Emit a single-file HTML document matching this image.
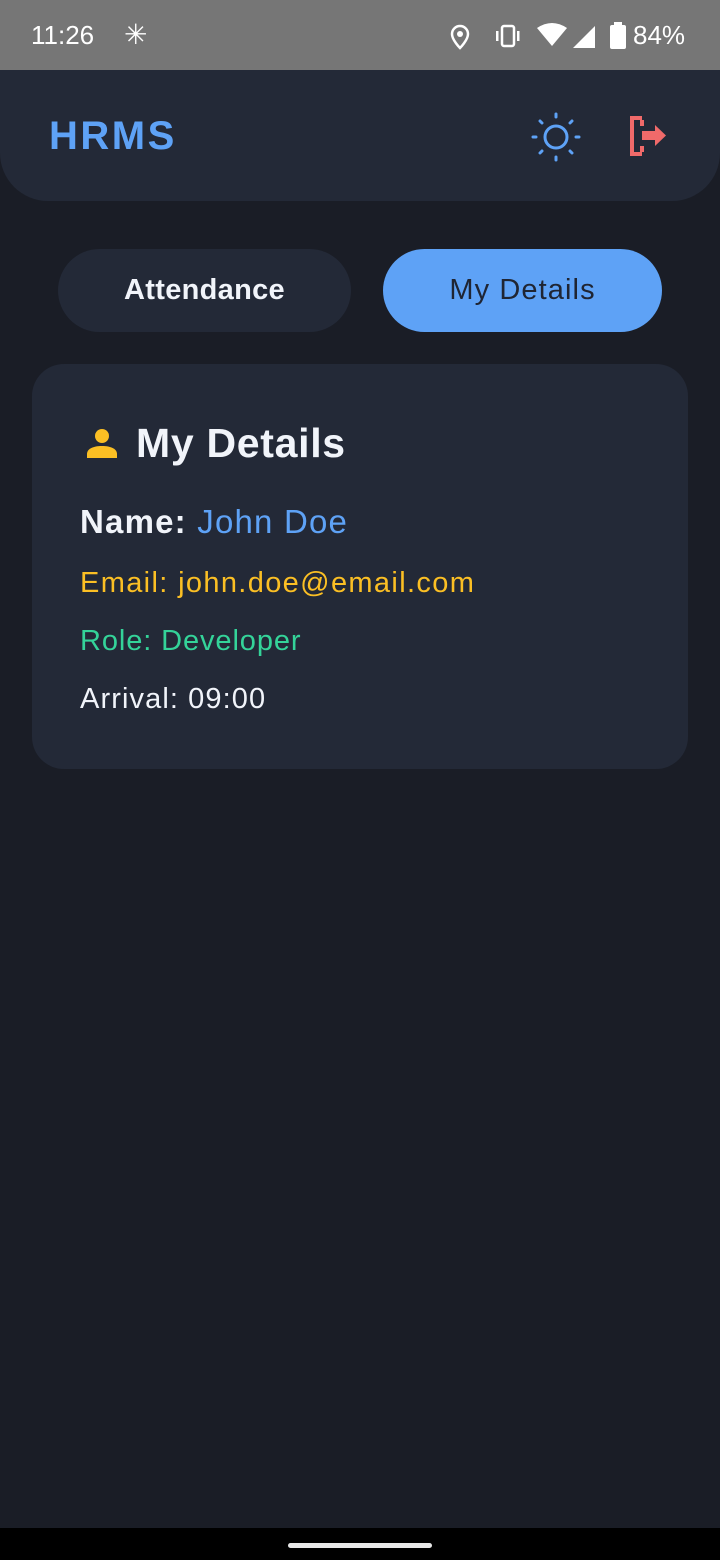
<!DOCTYPE html>
<html><head><meta charset="utf-8"><style>
*{margin:0;padding:0;box-sizing:border-box}
body{width:720px;height:1560px;background:#1a1d26;font-family:"Liberation Sans",sans-serif;position:relative;overflow:hidden}
.sb{position:absolute;top:0;left:0;width:720px;height:70px;background:#767676;color:#fff}
.hdr{position:absolute;top:70px;left:0;width:720px;height:131px;background:#232937;border-radius:0 0 48px 48px}
.t{position:absolute;white-space:nowrap}
.tab{position:absolute;top:249px;height:83px;border-radius:42px;font-weight:bold;font-size:29px;display:flex;align-items:center;justify-content:center}
.card{position:absolute;left:32px;top:364px;width:656px;height:405px;background:#232937;border-radius:32px}
</style></head><body>
<div class="sb">
<div class="t" style="left:31px;top:20px;font-size:26px">11:26</div>
<div class="t" style="left:124px;top:18px;font-size:28px">✳</div>
<svg style="position:absolute;left:449px;top:24px" width="22" height="26" viewBox="0 0 22 26"><path d="M11 2a8 8 0 0 0-8 8c0 6 8 14 8 14s8-8 8-14a8 8 0 0 0-8-8z" fill="none" stroke="#fff" stroke-width="2.5"/><circle cx="11" cy="10" r="3" fill="#fff"/></svg>
<svg style="position:absolute;left:493px;top:24px" width="30" height="24"><rect x="9" y="2" width="12" height="20" rx="2" fill="none" stroke="#fff" stroke-width="2.5"/><rect x="3" y="7" width="2.5" height="10" fill="#fff"/><rect x="24" y="7" width="2.5" height="10" fill="#fff"/></svg>
<svg style="position:absolute;left:537px;top:22px" width="60" height="28"><path d="M0 6Q15-4 30 6L15 24Z" fill="#fff"/><path d="M58 4V26H36Z" fill="#fff"/></svg>
<svg style="position:absolute;left:609px;top:22px" width="18" height="27"><rect x="5" y="0" width="8" height="4" fill="#fff"/><rect x="1" y="3" width="16" height="24" rx="2" fill="#fff"/></svg>
<div class="t" style="left:633px;top:20px;font-size:26px">84%</div>
</div>
<div class="hdr"></div>
<div class="t" style="left:49px;top:114px;font-size:40px;font-weight:bold;color:#5ea2f6;letter-spacing:2.5px">HRMS</div>
<svg style="position:absolute;left:530px;top:112px" width="52" height="50" viewBox="0 0 52 50"><circle cx="26" cy="25" r="11" fill="none" stroke="#5ea2f6" stroke-width="3"/><g stroke="#5ea2f6" stroke-width="3" stroke-linecap="round"><path d="M26 2v3M26 45v3M3 25h3M46 25h3M10 9l2 2M40 39l2 2M42 9l-2 2M12 39l-2 2"/></g></svg>
<svg style="position:absolute;left:628px;top:115px" width="42" height="42" viewBox="0 0 42 42"><path d="M14 3H4v36h10" fill="none" stroke="#f06a6a" stroke-width="4"/><path d="M14 5v6M14 31v6" stroke="#f06a6a" stroke-width="4"/><rect x="14" y="16" width="14" height="9" fill="#f06a6a"/><path d="M27 10l11 10.5L27 31z" fill="#f06a6a"/></svg>
<div class="tab" style="left:58px;width:293px;background:#232937;color:#f1f4fa;letter-spacing:0.3px">Attendance</div>
<div class="tab" style="left:383px;width:279px;background:#5ea2f6;color:#1f2533;font-weight:normal;letter-spacing:1.1px">My Details</div>
<div class="card"></div>
<svg style="position:absolute;left:86px;top:427px" width="32" height="32" viewBox="0 0 32 32"><circle cx="16" cy="9" r="7" fill="#fbbf24"/><path d="M1 31v-4c0-5 6-8 15-8s15 3 15 8v4z" fill="#fbbf24"/></svg>
<div class="t" style="left:136px;top:420px;font-size:41px;font-weight:bold;color:#f1f4fa;letter-spacing:0.7px">My Details</div>
<div class="t" style="left:80px;top:503px;font-size:33px;color:#f1f4fa;letter-spacing:1.2px"><b>Name:</b> <span style="color:#5ea2f6">John Doe</span></div>
<div class="t" style="left:80px;top:567px;font-size:29px;color:#fbbf24;letter-spacing:1.35px">Email: john.doe@email.com</div>
<div class="t" style="left:80px;top:625px;font-size:29px;color:#34d399;letter-spacing:0.9px">Role: Developer</div>
<div class="t" style="left:80px;top:683px;font-size:29px;color:#f1f4fa;letter-spacing:1.1px">Arrival: 09:00</div>
<div style="position:absolute;left:0;top:1528px;width:720px;height:32px;background:#000"></div>
<div style="position:absolute;left:288px;top:1543px;width:144px;height:5px;border-radius:3px;background:#e8e8e8"></div>
</body></html>
